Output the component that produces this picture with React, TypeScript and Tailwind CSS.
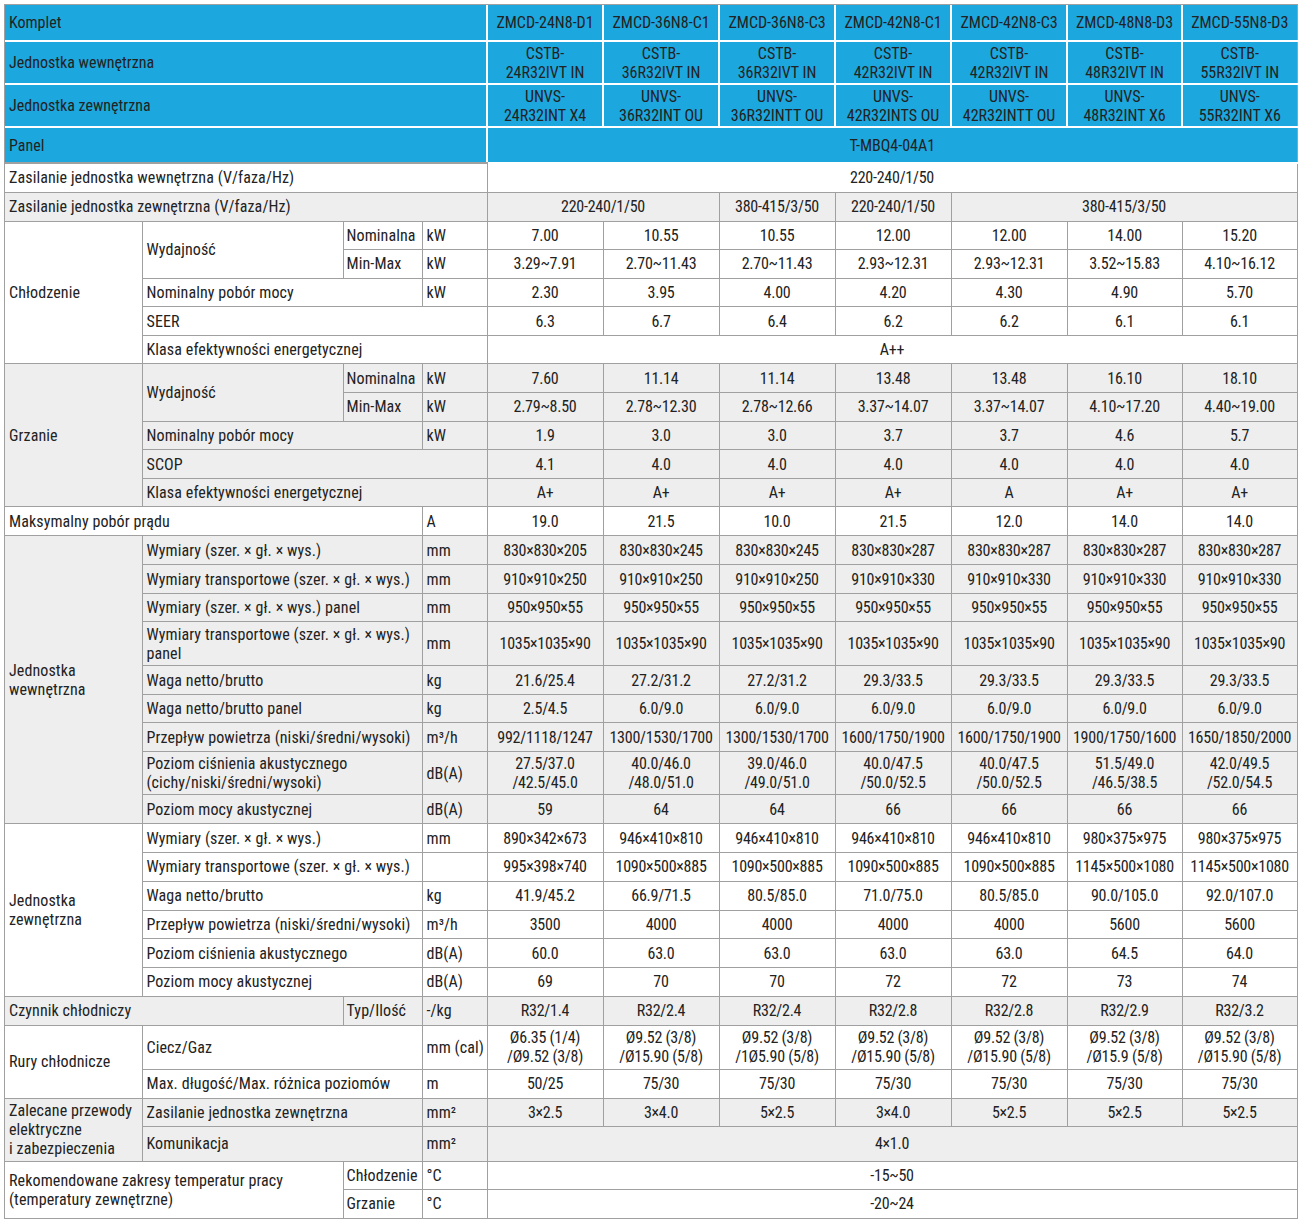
const line = "border-r border-b border-[#a0a0a0]";
const lbl = `${line} px-1 text-left whitespace-pre tracking-[0.1px]`;
const val = `${line} text-center whitespace-pre tracking-[-0.25px]`;
const hd = "bg-[#1ca7de] border-r-2 border-b-2 border-white whitespace-pre";
const hdLast = "bg-[#1ca7de] border-b-2 border-r border-b-white border-r-[#a0a0a0] whitespace-pre";
const gray = "bg-[#eeeeee]";

const models = [
  "ZMCD-24N8-D1",
  "ZMCD-36N8-C1",
  "ZMCD-36N8-C3",
  "ZMCD-42N8-C1",
  "ZMCD-42N8-C3",
  "ZMCD-48N8-D3",
  "ZMCD-55N8-D3",
];
const indoor = ["24", "36", "36", "42", "42", "48", "55"].map((n) => `CSTB-\n${n}R32IVT IN`);
const outdoor = [
  "24R32INT X4",
  "36R32INT OU",
  "36R32INTT OU",
  "42R32INTS OU",
  "42R32INTT OU",
  "48R32INT X6",
  "55R32INT X6",
].map((n) => `UNVS-\n${n}`);

function Cells({ v }: { v: string[] }) {
  return (
    <>
      {v.map((x, i) => (
        <td key={i} className={val}>
          {x}
        </td>
      ))}
    </>
  );
}

function HeadCells({ v }: { v: string[] }) {
  return (
    <>
      {v.map((x, i) => (
        <td key={i} className={`${i === v.length - 1 ? hdLast : hd} text-center`}>
          {x}
        </td>
      ))}
    </>
  );
}

const r7 = (a: string, b: string) => [a, b, b, b, b, b, b];

export default function App() {
  return (
    <div className="min-h-screen bg-white p-1 font-[Roboto_Condensed,Roboto,Liberation_Sans,sans-serif] text-[16px] leading-[19px] text-[#222]">
      <div className="inline-block border-t border-l border-[#a0a0a0]">
        <table className="w-[1292px] table-fixed border-collapse">
          <colgroup>
            <col className="w-[137px]" />
            <col className="w-[201px]" />
            <col className="w-[79px]" />
            <col className="w-[65px]" />
            <col className="w-[116px]" />
            <col className="w-[116px]" />
            <col className="w-[116px]" />
            <col className="w-[116px]" />
            <col className="w-[116px]" />
            <col className="w-[115px]" />
            <col className="w-[115px]" />
          </colgroup>
          <tbody>
            {/* header */}
            <tr className="h-[36px]">
              <td colSpan={4} className={`${hd} px-1`}>Komplet</td>
              <HeadCells v={models} />
            </tr>
            <tr className="h-[43px]">
              <td colSpan={4} className={`${hd} px-1`}>Jednostka wewnętrzna</td>
              <HeadCells v={indoor} />
            </tr>
            <tr className="h-[43px]">
              <td colSpan={4} className={`${hd} px-1`}>Jednostka zewnętrzna</td>
              <HeadCells v={outdoor} />
            </tr>
            <tr className="h-[36px]">
              <td colSpan={4} className={`${hd} border-b-[#a0a0a0] px-1`}>Panel</td>
              <td colSpan={7} className={`${hdLast} border-b-[#a0a0a0] text-center`}>T-MBQ4-04A1</td>
            </tr>

            {/* zasilanie */}
            <tr className="h-[29px]">
              <td colSpan={4} className={lbl}>Zasilanie jednostka wewnętrzna (V/faza/Hz)</td>
              <td colSpan={7} className={val}>220-240/1/50</td>
            </tr>
            <tr className={`h-[29px] ${gray}`}>
              <td colSpan={4} className={lbl}>Zasilanie jednostka zewnętrzna (V/faza/Hz)</td>
              <td colSpan={2} className={val}>220-240/1/50</td>
              <td className={val}>380-415/3/50</td>
              <td className={val}>220-240/1/50</td>
              <td colSpan={3} className={val}>380-415/3/50</td>
            </tr>

            {/* chłodzenie */}
            <tr className="h-[28.6px]">
              <td rowSpan={5} className={lbl}>Chłodzenie</td>
              <td rowSpan={2} className={lbl}>Wydajność</td>
              <td className={`${lbl} px-[3px]`}>Nominalna</td>
              <td className={lbl}>kW</td>
              <Cells v={["7.00", "10.55", "10.55", "12.00", "12.00", "14.00", "15.20"]} />
            </tr>
            <tr className="h-[28.6px]">
              <td className={`${lbl} px-[3px]`}>Min-Max</td>
              <td className={lbl}>kW</td>
              <Cells v={["3.29~7.91", "2.70~11.43", "2.70~11.43", "2.93~12.31", "2.93~12.31", "3.52~15.83", "4.10~16.12"]} />
            </tr>
            <tr className="h-[28.6px]">
              <td colSpan={2} className={lbl}>Nominalny pobór mocy</td>
              <td className={lbl}>kW</td>
              <Cells v={["2.30", "3.95", "4.00", "4.20", "4.30", "4.90", "5.70"]} />
            </tr>
            <tr className="h-[28.6px]">
              <td colSpan={3} className={lbl}>SEER</td>
              <Cells v={["6.3", "6.7", "6.4", "6.2", "6.2", "6.1", "6.1"]} />
            </tr>
            <tr className="h-[28.6px]">
              <td colSpan={3} className={lbl}>Klasa efektywności energetycznej</td>
              <td colSpan={7} className={val}>A++</td>
            </tr>

            {/* grzanie */}
            <tr className={`h-[28.6px] ${gray}`}>
              <td rowSpan={5} className={lbl}>Grzanie</td>
              <td rowSpan={2} className={lbl}>Wydajność</td>
              <td className={`${lbl} px-[3px]`}>Nominalna</td>
              <td className={lbl}>kW</td>
              <Cells v={["7.60", "11.14", "11.14", "13.48", "13.48", "16.10", "18.10"]} />
            </tr>
            <tr className={`h-[28.6px] ${gray}`}>
              <td className={`${lbl} px-[3px]`}>Min-Max</td>
              <td className={lbl}>kW</td>
              <Cells v={["2.79~8.50", "2.78~12.30", "2.78~12.66", "3.37~14.07", "3.37~14.07", "4.10~17.20", "4.40~19.00"]} />
            </tr>
            <tr className={`h-[28.6px] ${gray}`}>
              <td colSpan={2} className={lbl}>Nominalny pobór mocy</td>
              <td className={lbl}>kW</td>
              <Cells v={["1.9", "3.0", "3.0", "3.7", "3.7", "4.6", "5.7"]} />
            </tr>
            <tr className={`h-[28.6px] ${gray}`}>
              <td colSpan={3} className={lbl}>SCOP</td>
              <Cells v={r7("4.1", "4.0")} />
            </tr>
            <tr className={`h-[28.6px] ${gray}`}>
              <td colSpan={3} className={lbl}>Klasa efektywności energetycznej</td>
              <Cells v={["A+", "A+", "A+", "A+", "A", "A+", "A+"]} />
            </tr>

            <tr className="h-[29px]">
              <td colSpan={3} className={lbl}>Maksymalny pobór prądu</td>
              <td className={lbl}>A</td>
              <Cells v={["19.0", "21.5", "10.0", "21.5", "12.0", "14.0", "14.0"]} />
            </tr>

            {/* jednostka wewnętrzna */}
            <tr className={`h-[29px] ${gray}`}>
              <td rowSpan={9} className={lbl}>{"Jednostka\nwewnętrzna"}</td>
              <td colSpan={2} className={lbl}>Wymiary (szer. × gł. × wys.)</td>
              <td className={lbl}>mm</td>
              <Cells v={["830×830×205", "830×830×245", "830×830×245", "830×830×287", "830×830×287", "830×830×287", "830×830×287"]} />
            </tr>
            <tr className={`h-[29px] ${gray}`}>
              <td colSpan={2} className={lbl}>Wymiary transportowe (szer. × gł. × wys.)</td>
              <td className={lbl}>mm</td>
              <Cells v={["910×910×250", "910×910×250", "910×910×250", "910×910×330", "910×910×330", "910×910×330", "910×910×330"]} />
            </tr>
            <tr className={`h-[28px] ${gray}`}>
              <td colSpan={2} className={lbl}>Wymiary (szer. × gł. × wys.) panel</td>
              <td className={lbl}>mm</td>
              <Cells v={r7("950×950×55", "950×950×55")} />
            </tr>
            <tr className={`h-[44px] ${gray}`}>
              <td colSpan={2} className={lbl}>{"Wymiary transportowe (szer. × gł. × wys.)\npanel"}</td>
              <td className={lbl}>mm</td>
              <Cells v={r7("1035×1035×90", "1035×1035×90")} />
            </tr>
            <tr className={`h-[29px] ${gray}`}>
              <td colSpan={2} className={lbl}>Waga netto/brutto</td>
              <td className={lbl}>kg</td>
              <Cells v={["21.6/25.4", "27.2/31.2", "27.2/31.2", "29.3/33.5", "29.3/33.5", "29.3/33.5", "29.3/33.5"]} />
            </tr>
            <tr className={`h-[28px] ${gray}`}>
              <td colSpan={2} className={lbl}>Waga netto/brutto panel</td>
              <td className={lbl}>kg</td>
              <Cells v={r7("2.5/4.5", "6.0/9.0")} />
            </tr>
            <tr className={`h-[29px] ${gray}`}>
              <td colSpan={2} className={lbl}>Przepływ powietrza (niski/średni/wysoki)</td>
              <td className={lbl}>m³/h</td>
              <Cells v={["992/1118/1247", "1300/1530/1700", "1300/1530/1700", "1600/1750/1900", "1600/1750/1900", "1900/1750/1600", "1650/1850/2000"]} />
            </tr>
            <tr className={`h-[43px] ${gray}`}>
              <td colSpan={2} className={lbl}>{"Poziom ciśnienia akustycznego\n(cichy/niski/średni/wysoki)"}</td>
              <td className={lbl}>dB(A)</td>
              <Cells
                v={[
                  "27.5/37.0\n/42.5/45.0",
                  "40.0/46.0\n/48.0/51.0",
                  "39.0/46.0\n/49.0/51.0",
                  "40.0/47.5\n/50.0/52.5",
                  "40.0/47.5\n/50.0/52.5",
                  "51.5/49.0\n/46.5/38.5",
                  "42.0/49.5\n/52.0/54.5",
                ]}
              />
            </tr>
            <tr className={`h-[29px] ${gray}`}>
              <td colSpan={2} className={lbl}>Poziom mocy akustycznej</td>
              <td className={lbl}>dB(A)</td>
              <Cells v={["59", "64", "64", "66", "66", "66", "66"]} />
            </tr>

            {/* jednostka zewnętrzna */}
            <tr className="h-[28.7px]">
              <td rowSpan={6} className={lbl}>{"Jednostka\nzewnętrzna"}</td>
              <td colSpan={2} className={lbl}>Wymiary (szer. × gł. × wys.)</td>
              <td className={lbl}>mm</td>
              <Cells v={["890×342×673", "946×410×810", "946×410×810", "946×410×810", "946×410×810", "980×375×975", "980×375×975"]} />
            </tr>
            <tr className="h-[28.7px]">
              <td colSpan={2} className={lbl}>Wymiary transportowe (szer. × gł. × wys.)</td>
              <td className={lbl}></td>
              <Cells v={["995×398×740", "1090×500×885", "1090×500×885", "1090×500×885", "1090×500×885", "1145×500×1080", "1145×500×1080"]} />
            </tr>
            <tr className="h-[28.7px]">
              <td colSpan={2} className={lbl}>Waga netto/brutto</td>
              <td className={lbl}>kg</td>
              <Cells v={["41.9/45.2", "66.9/71.5", "80.5/85.0", "71.0/75.0", "80.5/85.0", "90.0/105.0", "92.0/107.0"]} />
            </tr>
            <tr className="h-[28.7px]">
              <td colSpan={2} className={lbl}>Przepływ powietrza (niski/średni/wysoki)</td>
              <td className={lbl}>m³/h</td>
              <Cells v={["3500", "4000", "4000", "4000", "4000", "5600", "5600"]} />
            </tr>
            <tr className="h-[28.7px]">
              <td colSpan={2} className={lbl}>Poziom ciśnienia akustycznego</td>
              <td className={lbl}>dB(A)</td>
              <Cells v={["60.0", "63.0", "63.0", "63.0", "63.0", "64.5", "64.0"]} />
            </tr>
            <tr className="h-[28.7px]">
              <td colSpan={2} className={lbl}>Poziom mocy akustycznej</td>
              <td className={lbl}>dB(A)</td>
              <Cells v={["69", "70", "70", "72", "72", "73", "74"]} />
            </tr>

            {/* czynnik */}
            <tr className={`h-[29px] ${gray}`}>
              <td colSpan={2} className={lbl}>Czynnik chłodniczy</td>
              <td className={`${lbl} px-[3px]`}>Typ/Ilość</td>
              <td className={lbl}>-/kg</td>
              <Cells v={["R32/1.4", "R32/2.4", "R32/2.4", "R32/2.8", "R32/2.8", "R32/2.9", "R32/3.2"]} />
            </tr>

            {/* rury */}
            <tr className="h-[44px]">
              <td rowSpan={2} className={lbl}>Rury chłodnicze</td>
              <td colSpan={2} className={lbl}>Ciecz/Gaz</td>
              <td className={lbl}>mm (cal)</td>
              <Cells
                v={[
                  "Ø6.35 (1/4)\n/Ø9.52 (3/8)",
                  "Ø9.52 (3/8)\n/Ø15.90 (5/8)",
                  "Ø9.52 (3/8)\n/1Ø5.90 (5/8)",
                  "Ø9.52 (3/8)\n/Ø15.90 (5/8)",
                  "Ø9.52 (3/8)\n/Ø15.90 (5/8)",
                  "Ø9.52 (3/8)\n/Ø15.9 (5/8)",
                  "Ø9.52 (3/8)\n/Ø15.90 (5/8)",
                ]}
              />
            </tr>
            <tr className="h-[29px]">
              <td colSpan={2} className={lbl}>Max. długość/Max. różnica poziomów</td>
              <td className={lbl}>m</td>
              <Cells v={r7("50/25", "75/30")} />
            </tr>

            {/* przewody */}
            <tr className={`h-[28px] ${gray}`}>
              <td rowSpan={2} className={lbl}>{"Zalecane przewody\nelektryczne\ni zabezpieczenia"}</td>
              <td colSpan={2} className={lbl}>Zasilanie jednostka zewnętrzna</td>
              <td className={lbl}>mm²</td>
              <Cells v={["3×2.5", "3×4.0", "5×2.5", "3×4.0", "5×2.5", "5×2.5", "5×2.5"]} />
            </tr>
            <tr className={`h-[35px] ${gray}`}>
              <td colSpan={2} className={lbl}>Komunikacja</td>
              <td className={lbl}>mm²</td>
              <td colSpan={7} className={val}>4×1.0</td>
            </tr>

            {/* temperatury */}
            <tr className="h-[28px]">
              <td colSpan={2} rowSpan={2} className={lbl}>
                {"Rekomendowane zakresy temperatur pracy\n(temperatury zewnętrzne)"}
              </td>
              <td className={`${lbl} px-[3px]`}>Chłodzenie</td>
              <td className={lbl}>°C</td>
              <td colSpan={7} className={val}>-15~50</td>
            </tr>
            <tr className="h-[29px]">
              <td className={`${lbl} px-[3px]`}>Grzanie</td>
              <td className={lbl}>°C</td>
              <td colSpan={7} className={val}>-20~24</td>
            </tr>
          </tbody>
        </table>
      </div>
    </div>
  );
}
